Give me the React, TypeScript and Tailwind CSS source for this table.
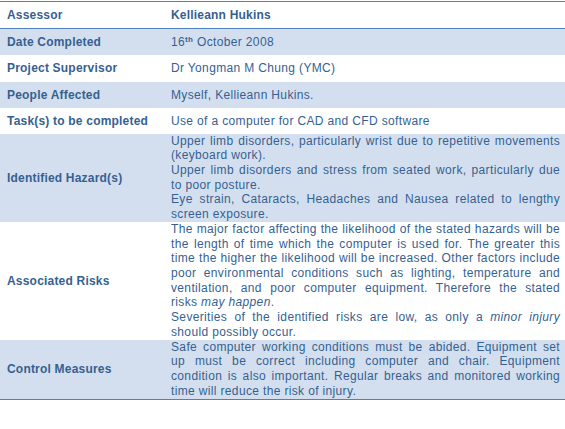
const rows: { label: string; value: React.ReactNode; shaded: boolean; h: string }[] = [
  {
    label: "Date Completed",
    value: (
      <>
        16<span className="relative -top-[4px] text-[8px] font-bold">th</span> October 2008
      </>
    ),
    shaded: true,
    h: "h-[26px]",
  },
  { label: "Project Supervisor", value: "Dr Yongman M Chung (YMC)", shaded: false, h: "h-[27px]" },
  { label: "People Affected", value: "Myself, Kellieann Hukins.", shaded: true, h: "h-[26px]" },
  { label: "Task(s) to be completed", value: "Use of a computer for CAD and CFD software", shaded: false, h: "h-[26px]" },
];

// each entry is one printed line; "j" lines are stretched to the full width like Word's justify
type Line = { j?: boolean; text: React.ReactNode };

const hazards: Line[] = [
  { j: true, text: "Upper limb disorders, particularly wrist due to repetitive movements" },
  { text: "(keyboard work)." },
  { j: true, text: "Upper limb disorders and stress from seated work, particularly due" },
  { text: "to poor posture." },
  { j: true, text: "Eye strain, Cataracts, Headaches and Nausea related to lengthy" },
  { text: "screen exposure." },
];

const risks: Line[] = [
  { j: true, text: "The major factor affecting the likelihood of the stated hazards will be" },
  { j: true, text: "the length of time which the computer is used for. The greater this" },
  { j: true, text: "time the higher the likelihood will be increased. Other factors include" },
  { j: true, text: "poor environmental conditions such as lighting, temperature and" },
  { j: true, text: "ventilation, and poor computer equipment. Therefore the stated" },
  {
    text: (
      <>
        risks <i>may happen</i>.
      </>
    ),
  },
  {
    j: true,
    text: (
      <>
        Severities of the identified risks are low, as only a <i>minor injury</i>
      </>
    ),
  },
  { text: "should possibly occur." },
];

const controls: Line[] = [
  { j: true, text: "Safe computer working conditions must be abided. Equipment set" },
  { j: true, text: "up must be correct including computer and chair. Equipment" },
  { j: true, text: "condition is also important. Regular breaks and monitored working" },
  { text: "time will reduce the risk of injury." },
];

function Label({ children }: { children: React.ReactNode }) {
  return (
    <td className="w-[165px] pl-[7px] pr-1 align-middle font-bold tracking-[0.2px] text-[#365f91]">{children}</td>
  );
}

function Lines({ lines }: { lines: Line[] }) {
  return (
    <td className="pl-[6px] pr-[5px] leading-[14.7px] tracking-[0.35px]">
      {lines.map((l, i) => (
        <div key={i} className={l.j ? "text-justify [text-align-last:justify]" : ""}>
          {l.text}
        </div>
      ))}
    </td>
  );
}

export default function App() {
  return (
    <div className="w-[565px] h-[429px] bg-white font-['Liberation_Sans',Arial,sans-serif] text-[12px] text-[#365f91]">
      <table className="w-full table-fixed border-collapse mt-px">
        <colgroup>
          <col className="w-[165px]" />
          <col />
        </colgroup>
        <tbody>
          <tr className="h-[27px] border-t border-b border-[#4f81bd]">
            <Label>Assessor</Label>
            <td className="pl-[6px] font-bold tracking-[0.2px]">Kellieann Hukins</td>
          </tr>
          {rows.map((r) => (
            <tr key={r.label} className={`${r.h} ${r.shaded ? "bg-[#d3dfee]" : "bg-white"}`}>
              <Label>{r.label}</Label>
              <td className="pl-[6px] tracking-[0.35px]">{r.value}</td>
            </tr>
          ))}
          <tr className="h-[88px] bg-[#d3dfee]">
            <Label>Identified Hazard(s)</Label>
            <Lines lines={hazards} />
          </tr>
          <tr className="h-[118px] bg-white">
            <Label>Associated Risks</Label>
            <Lines lines={risks} />
          </tr>
          <tr className="h-[59px] bg-[#d3dfee] border-b border-[#4f81bd]">
            <Label>Control Measures</Label>
            <Lines lines={controls} />
          </tr>
        </tbody>
      </table>
    </div>
  );
}
